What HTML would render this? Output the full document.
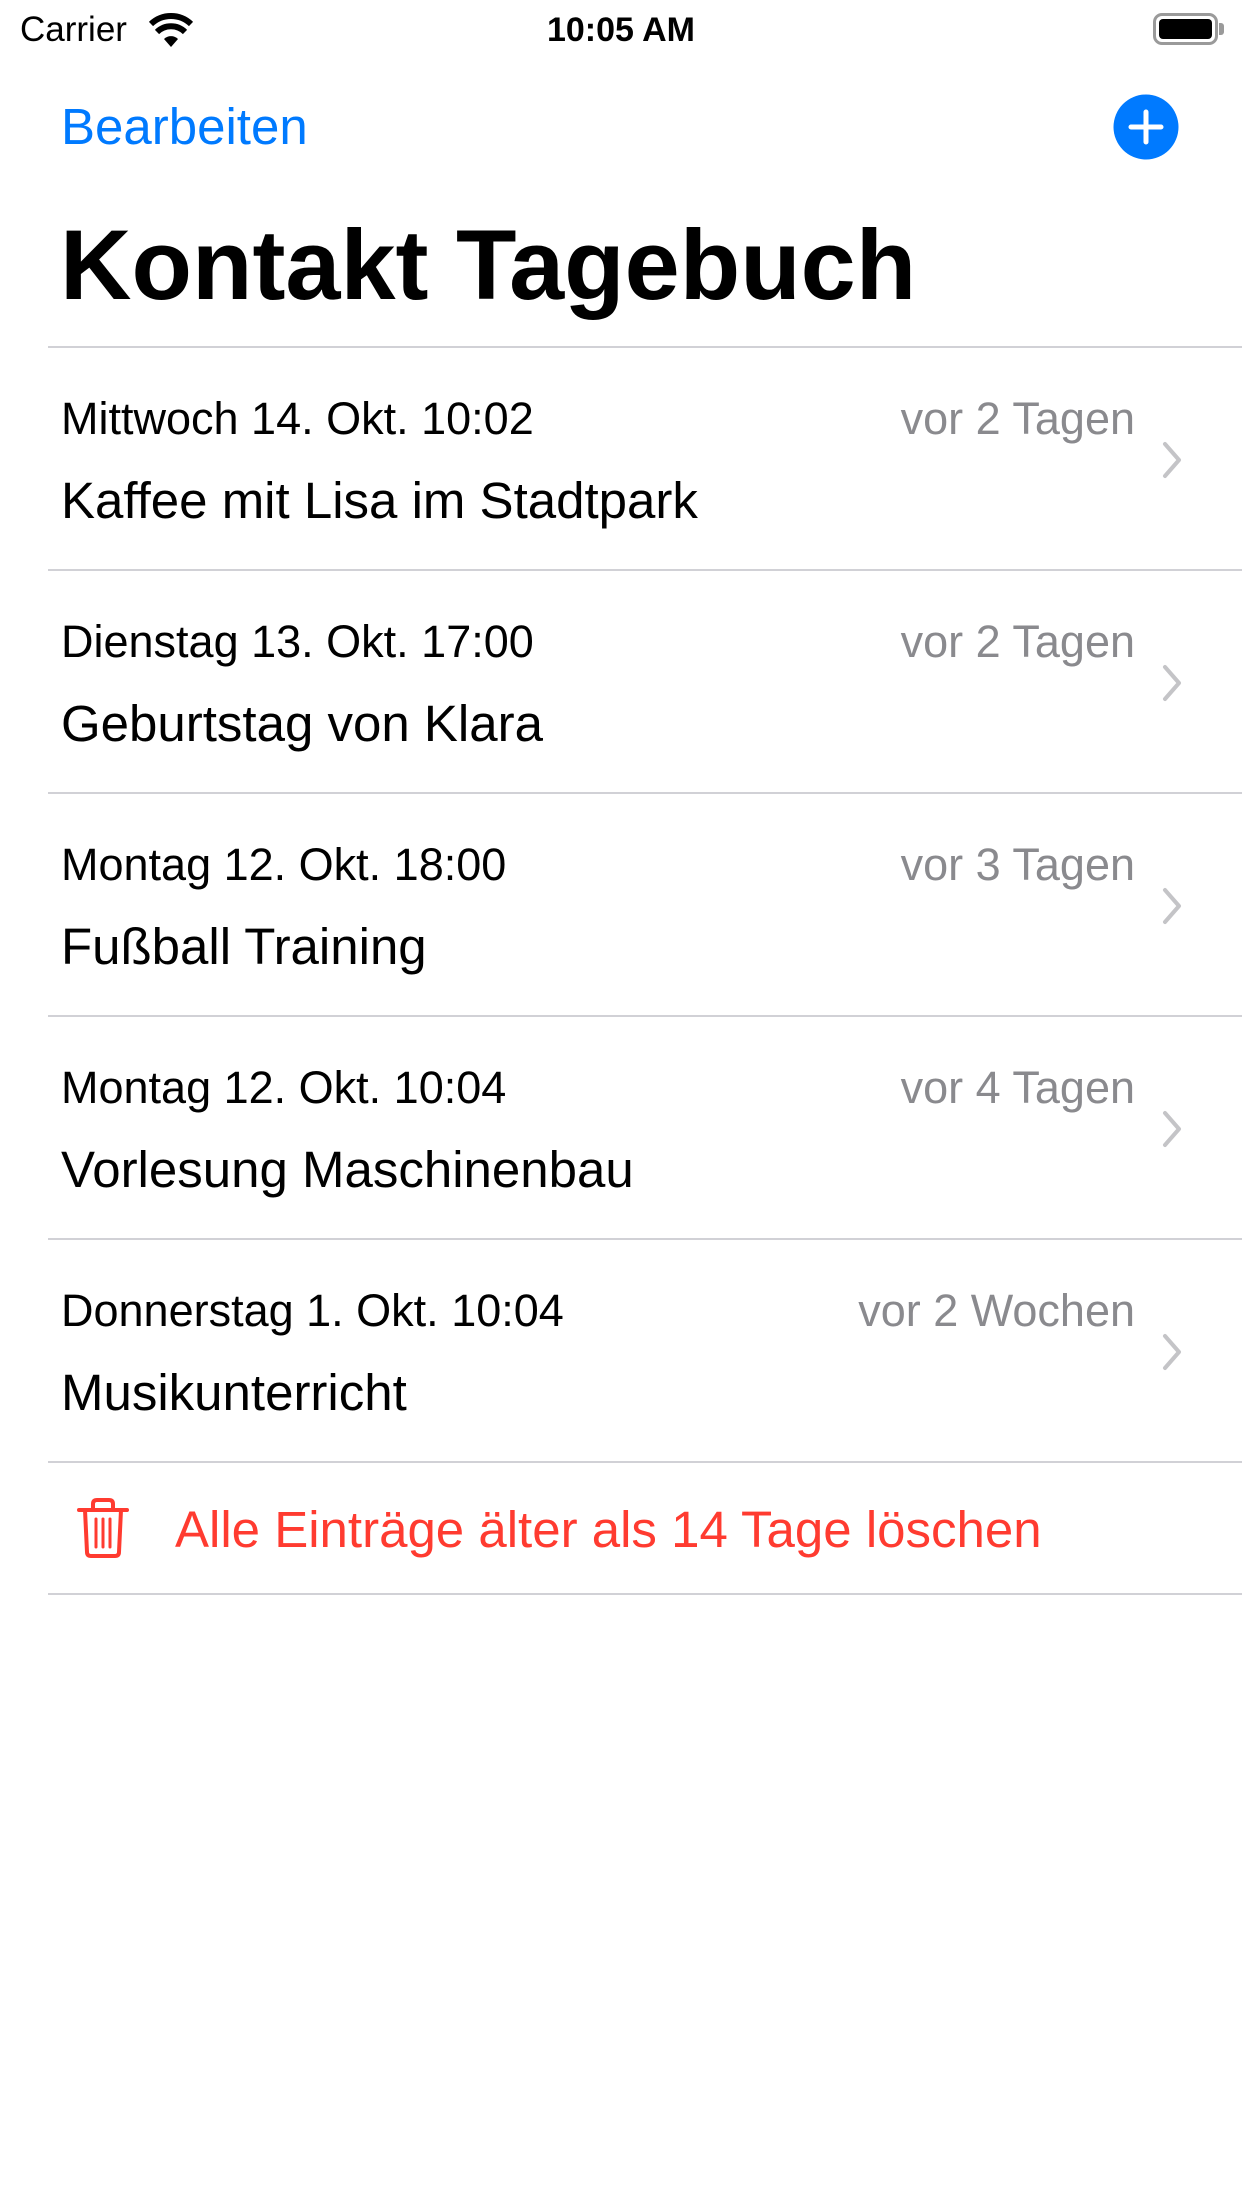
<!DOCTYPE html>
<html><head><meta charset="utf-8"><style>
*{margin:0;padding:0;box-sizing:border-box}
body{width:1242px;height:2208px;background:#fff;position:relative;overflow:hidden;font-family:"Liberation Sans",sans-serif;color:#000}
.a{position:absolute;white-space:nowrap}
.sep{position:absolute;left:48px;right:0;height:2px;background:#d1d1d6}
.d{font-size:45px;line-height:1}
.t{font-size:51px;line-height:1}
.r{font-size:45px;line-height:1;color:#8a8a8e;right:107px}
</style></head><body>
<div class="a" style="left:20px;top:11px;font-size:35px;line-height:38px">Carrier</div>
<svg class="a" style="left:148px;top:13px" width="46" height="34" viewBox="0 0 46 34">
<path d="M23 34 L16 26 A10 10 0 0 1 30 26 Z" fill="#000"/>
<path d="M9 19 A20 20 0 0 1 37 19" stroke="#000" stroke-width="6" fill="none"/>
<path d="M3 11 A29 29 0 0 1 43 11" stroke="#000" stroke-width="6" fill="none"/>
</svg>
<div class="a" style="left:0;width:1242px;text-align:center;top:12px;font-size:34px;font-weight:bold;line-height:36px">10:05 AM</div>
<div class="a" style="left:1153px;top:13px;width:65px;height:32px;border:3px solid #9a9a9a;border-radius:9px;padding:3px"><div style="width:100%;height:100%;background:#000;border-radius:4px"></div></div>
<div class="a" style="left:1219px;top:23px;width:5px;height:12px;background:#9a9a9a;border-radius:0 3px 3px 0"></div>

<div class="a" style="left:61px;top:98px;font-size:51px;color:#007aff;line-height:58px">Bearbeiten</div>
<svg class="a" style="left:1113px;top:94px" width="66" height="66" viewBox="0 0 66 66"><circle cx="33" cy="33" r="32.5" fill="#007aff"/><path d="M33 18V48M18 33H48" stroke="#fff" stroke-width="5" stroke-linecap="round"/></svg>

<div class="a" style="left:60px;top:210px;font-size:99px;font-weight:bold;line-height:110px">Kontakt Tagebuch</div>

<div class="sep" style="top:346px"></div>
<div class="sep" style="top:569px"></div>
<div class="sep" style="top:792px"></div>
<div class="sep" style="top:1015px"></div>
<div class="sep" style="top:1238px"></div>
<div class="sep" style="top:1461px"></div>
<div class="sep" style="top:1593px"></div>

<div class="a d" style="left:61px;top:396px">Mittwoch 14. Okt. 10:02</div>
<div class="a r" style="top:396px">vor 2 Tagen</div>
<div class="a t" style="left:61px;top:475px">Kaffee mit Lisa im Stadtpark</div>

<div class="a d" style="left:61px;top:619px">Dienstag 13. Okt. 17:00</div>
<div class="a r" style="top:619px">vor 2 Tagen</div>
<div class="a t" style="left:61px;top:698px">Geburtstag von Klara</div>

<div class="a d" style="left:61px;top:842px">Montag 12. Okt. 18:00</div>
<div class="a r" style="top:842px">vor 3 Tagen</div>
<div class="a t" style="left:61px;top:921px">Fußball Training</div>

<div class="a d" style="left:61px;top:1065px">Montag 12. Okt. 10:04</div>
<div class="a r" style="top:1065px">vor 4 Tagen</div>
<div class="a t" style="left:61px;top:1144px">Vorlesung Maschinenbau</div>

<div class="a d" style="left:61px;top:1288px">Donnerstag 1. Okt. 10:04</div>
<div class="a r" style="top:1288px">vor 2 Wochen</div>
<div class="a t" style="left:61px;top:1367px">Musikunterricht</div>

<svg class="a" style="left:1160px;top:440px" width="24" height="1000" viewBox="0 0 24 1000" fill="none" stroke="#c4c4c7" stroke-width="4" stroke-linecap="round" stroke-linejoin="round">
<path d="M5 4 L19 20 L5 36"/><path d="M5 227 L19 243 L5 259"/><path d="M5 450 L19 466 L5 482"/><path d="M5 673 L19 689 L5 705"/><path d="M5 896 L19 912 L5 928"/>
</svg>

<svg class="a" style="left:76px;top:1498px" width="54" height="60" viewBox="0 0 54 60" fill="none" stroke="#ff3b30" stroke-width="4" stroke-linecap="round" stroke-linejoin="round">
<path d="M3 12H51"/><path d="M17 12V6Q17 2 21 2H33Q37 2 37 6V12"/><path d="M9 12L11 54Q11 58 15 58H39Q43 58 43 54L45 12"/><path d="M20 21V49M27 21V49M34 21V49" stroke-width="3"/>
</svg>
<div class="a" style="left:175px;top:1501px;font-size:51px;color:#ff3b30;line-height:58px">Alle Einträge älter als 14 Tage löschen</div>
</body></html>
